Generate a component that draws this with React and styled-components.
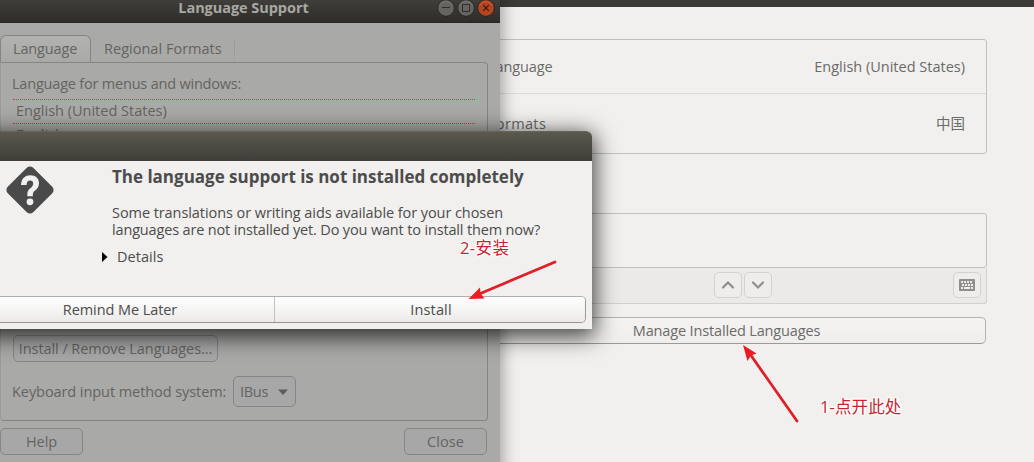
import React from "react";
import styled, { createGlobalStyle, css } from "styled-components";

const GlobalStyle = createGlobalStyle`
  html, body { margin: 0; padding: 0; overflow: hidden; }
  *, *::before, *::after { box-sizing: border-box; }
`;

const uiFont = css`
  font-family: "Open Sans", "Noto Sans CJK SC", sans-serif;
  font-size: 14.5px;
  line-height: 18px;
`;

const Desktop = styled.main`
  ${uiFont}
  position: relative;
  width: 1034px;
  height: 462px;
  overflow: hidden;
  background: #f1f0ee;
`;

const Label = styled.span`
  white-space: nowrap;
  letter-spacing: ${(p) => p.$track || 0}px;
`;

/* Settings window */

const SettingsWindow = styled.section`
  position: absolute;
  left: 430px;
  top: 0;
  width: 604px;
  height: 462px;
  display: flex;
  flex-direction: column;
  background: #f1f0ee;
  color: #6b6b6a;
`;

const SettingsBar = styled.header`
  height: 7px;
  background: #3c3b37;
`;

const SettingsBody = styled.div`
  display: flex;
  flex-direction: column;
  padding: 32px 47px 0 37px;
`;

const List = styled.div`
  display: flex;
  flex-direction: column;
  border: 1px solid #c1c0be;
  border-radius: 3px;
`;

const ListRow = styled.div`
  display: flex;
  align-items: center;
  justify-content: space-between;
  height: ${(p) => p.$height}px;
  padding: 0 21px 0 20px;
  & + & { border-top: 1px solid #dbdad8; }
`;

const Sources = styled.div`
  display: flex;
  flex-direction: column;
  margin-top: 59px;
`;

const SourceList = styled(List)`
  height: 55px;
`;

const SourceToolbar = styled.div`
  display: flex;
  align-items: flex-start;
  height: 36px;
  padding: 4px 5px 0 246px;
  background: #ebeae8;
  border: 1px solid #d1d0ce;
  border-top: 0;
  border-radius: 0 0 3px 3px;
`;

const ToolButton = styled.button`
  display: flex;
  align-items: center;
  justify-content: center;
  width: 28px;
  height: 26px;
  margin-right: 2px;
  padding: 0;
  color: #8f8e8a;
  background: #eeedec;
  border: 1px solid #d3d2d0;
  border-radius: 5px;
`;

const KeyboardButton = styled(ToolButton)`
  margin: 0 0 0 auto;
`;

const ManageButton = styled.button`
  ${uiFont}
  display: flex;
  align-items: center;
  justify-content: center;
  height: 27px;
  margin: 13px 1px 0 0;
  padding: 0;
  color: #6b6b6a;
  background: linear-gradient(#f4f3f2, #efeeec);
  border: 1px solid #b3b2b0;
  border-bottom-color: #9b9a98;
  border-radius: 5px;
`;

/* Language Support window */

const LanguageWindow = styled.section`
  position: absolute;
  left: -13px;
  top: -8px;
  width: 513px;
  height: 500px;
  display: flex;
  flex-direction: column;
  color: #65645f;
  background: #a9a9a7;
  box-shadow: 0 3px 16px 1px rgba(0, 0, 0, 0.4);
`;

const LanguageBar = styled.header`
  position: relative;
  display: flex;
  align-items: center;
  justify-content: center;
  height: 31px;
  flex: none;
  padding-top: 2px;
  background: linear-gradient(#454440, #2e2d29);
  border-bottom: 1px solid #282824;
  color: #a9a7a1;
  font-weight: 700;
`;

const WindowControls = styled.div`
  position: absolute;
  right: 5px;
  top: 7px;
  display: flex;
  gap: 2px;
`;

const LanguageBody = styled.div`
  display: flex;
  flex-direction: column;
  padding: 12px 12px 0 13px;
`;

const Tabs = styled.div`
  display: flex;
  align-items: flex-end;
  height: 27px;
`;

const Tab = styled.div`
  display: flex;
  align-items: center;
  height: 27px;
  padding: 0 13px;
  ${(p) =>
    p.$active
      ? css`
          width: 91px;
          border: 1px solid #858583;
          border-bottom: 0;
          border-radius: 6px 6px 0 0;
          background: linear-gradient(#b2b2b0, #a9a9a7);
          padding-left: 12px;
        `
      : css`
          width: 144px;
          border-right: 1px solid #9c9c9a;
          border-image: linear-gradient(#a9a9a7, #969694, #a9a9a7) 1;
        `}
`;

const Page = styled.div`
  display: flex;
  flex-direction: column;
  height: 359px;
  padding: 12px 12px 0 11px;
  border: 1px solid #858583;
  border-left-color: #9a9a98;
  border-radius: 0 4px 4px 4px;
`;

const Languages = styled.div`
  display: flex;
  flex-direction: column;
  height: 236px;
  margin: 6px 0 0 1px;
  overflow: hidden;
`;

const LanguageItem = styled.div`
  display: flex;
  flex-direction: column;
  flex: none;
  height: 24px;
  padding: 2px 0 0 3px;
  border-top: 1px dotted #b8452f;
`;

const Button = styled.button`
  ${uiFont}
  display: flex;
  align-items: center;
  justify-content: ${(p) => (p.$spread ? "space-between" : "center")};
  flex: none;
  width: ${(p) => p.$width}px;
  height: ${(p) => p.$height || 27}px;
  padding: ${(p) => (p.$spread ? "0 7px 0 6px" : 0)};
  color: #65645f;
  background: #a7a7a8;
  border: 1px solid #868684;
  border-radius: 5px;
`;

const InstallRemoveButton = styled(Button)`
  margin-left: 1px;
`;

const InputMethod = styled.div`
  display: flex;
  align-items: center;
  justify-content: space-between;
  width: 284px;
  margin-top: 14px;
`;

const Actions = styled.div`
  display: flex;
  justify-content: space-between;
  margin: 7px 1px 0 0;
`;

/* Question dialog */

const Dialog = styled.section`
  position: absolute;
  left: -41px;
  top: 131px;
  width: 633px;
  height: 198px;
  display: flex;
  flex-direction: column;
  color: #4c4c4c;
  background: #f1f0ee;
  border-radius: 6px 6px 0 0;
  box-shadow: 0 5px 22px 3px rgba(0, 0, 0, 0.72);
`;

const DialogBar = styled.header`
  flex: none;
  height: 30px;
  background: linear-gradient(#5b594f, #3e3d38);
  border-top: 1px solid #66645b;
  border-radius: 6px 6px 0 0;
`;

const DialogBody = styled.div`
  display: flex;
  gap: 58px;
  height: 135px;
  flex: none;
  padding: 5px 0 0 47px;
`;

const DialogText = styled.div`
  display: flex;
  flex-direction: column;
`;

const DialogTitle = styled.h1`
  margin: 0;
  font-size: 17px;
  line-height: 22px;
  font-weight: 700;
  letter-spacing: -0.01px;
  white-space: nowrap;
`;

const Message = styled.p`
  display: flex;
  flex-direction: column;
  margin: 16px 0 0;
  line-height: 17px;
`;

const Details = styled.div`
  display: flex;
  align-items: center;
  gap: 9px;
  margin: 10px 0 0 -10px;
`;

const DialogActions = styled.div`
  display: flex;
  width: 622px;
  height: 27px;
  margin-left: 5px;
  border: 1px solid #b0afad;
  border-bottom-color: #979694;
  border-right-color: #979694;
  border-radius: 5px;
  overflow: hidden;
`;

const DialogButton = styled.button`
  ${uiFont}
  flex: 1;
  padding: 0 0 0 1px;
  color: #4c4c4c;
  background: linear-gradient(#ffffff, #ebeae8);
  border: 0;
  & + & {
    padding-left: 2px;
    border-left: 1px solid #c4c3c1;
  }
`;

/* Annotations */

const ArrowLayer = styled.svg`
  position: absolute;
  inset: 0;
  pointer-events: none;
`;

const Note = styled.div`
  position: absolute;
  left: ${(p) => p.$x}px;
  top: ${(p) => p.$y}px;
  font: 16.5px/24px "Open Sans", "Noto Sans CJK SC", sans-serif;
  letter-spacing: ${(p) => p.$track}px;
  color: #c6252d;
  white-space: nowrap;
  text-shadow: 0 0 2px #fff, 1px 1px 1px #fff, -1px -1px 1px #fff,
    1px -1px 1px #fff, -1px 1px 1px #fff, 2px 0 1px #fff;
`;

function ControlIcon({ kind }) {
  const close = kind === "close";
  return (
    <svg width="18" height="18" viewBox="0 0 18 18" fill="none">
      <circle cx="9" cy="9" r="8.3" fill={close ? "#b5451f" : "#65645f"} stroke="#22211e" strokeWidth="0.8" />
      <path d="M2.5 7a7 7 0 0 1 13 0" stroke={close ? "#c96743" : "#7b7a74"} strokeWidth="0.8" />
      {kind === "minimize" && <path d="M5 8.5h8" stroke="#302f2b" />}
      {kind === "maximize" && <rect x="5.5" y="5.5" width="7" height="7" stroke="#302f2b" />}
      {close && <path d="M6.2 6.2l5.6 5.6M11.8 6.2l-5.6 5.6" stroke="#3a1a0e" strokeWidth="1.2" />}
    </svg>
  );
}

function Chevron({ up }) {
  return (
    <svg width="14" height="10" viewBox="0 0 14 10" fill="none">
      <path
        d={up ? "M2 7.5L7 2.5L12 7.5" : "M2 2.5L7 7.5L12 2.5"}
        stroke="currentColor"
        strokeWidth="2.2"
        strokeLinecap="round"
      />
    </svg>
  );
}

function KeyboardIcon() {
  return (
    <svg width="16" height="12" viewBox="0 0 16 12">
      <rect width="16" height="12" rx="0.7" fill="currentColor" />
      <path
        d="M2 2h2v2h-2zM5 2h2v2h-2zM8 2h2v2h-2zM11 2h2v2h-2zM3 5h2v2h-2zM6 5h2v2h-2zM9 5h2v2h-2zM12 5h2v2h-2zM2 8h2v2h-2zM5 8h6v2h-6zM12 8h2v2h-2z"
        fill="#eeedec"
      />
    </svg>
  );
}

function QuestionIcon() {
  return (
    <svg width="48" height="48" viewBox="0 0 48 48" fill="none">
      <rect x="6" y="6" width="36" height="36" rx="4.5" fill="#4a4a4a" transform="rotate(45 24 24)" />
      <path
        d="M15 19C15.200 12.500 19 9.200 24.300 9.200C29.800 9.200 33 12.500 33 17.200C33 21 31 23 28.800 24.700C27 26.100 26.800 27.300 26.800 30.300H21.300C21.300 26 21.800 24.300 24.300 22.300C26.300 20.700 27.200 19.500 27.200 17.500C27.200 15.500 26 14.400 24 14.400C21.800 14.400 20.600 16 20.600 19Z"
        fill="#f1f0ee"
      />
      <circle cx="24" cy="35.800" r="3.400" fill="#f1f0ee" />
    </svg>
  );
}

const notes = [
  { x: 460, y: 236, track: 0.4, text: "2-安装" },
  { x: 820, y: 395, track: 0.1, text: "1-点开此处" },
];

export default function App() {
  return (
    <Desktop>
      <GlobalStyle />
      <SettingsWindow>
        <SettingsBar />
        <SettingsBody>
          <List>
            <ListRow $height={53}>
              <Label $track={-0.1}>Language</Label>
              <Label>English (United States)</Label>
            </ListRow>
            <ListRow $height={60}>
              <Label $track={0.35}>Formats</Label>
              <Label>中国</Label>
            </ListRow>
          </List>
          <Sources>
            <SourceList />
            <SourceToolbar>
              <ToolButton><Chevron up /></ToolButton>
              <ToolButton><Chevron /></ToolButton>
              <KeyboardButton><KeyboardIcon /></KeyboardButton>
            </SourceToolbar>
          </Sources>
          <ManageButton><Label $track={-0.15}>Manage Installed Languages</Label></ManageButton>
        </SettingsBody>
      </SettingsWindow>

      <LanguageWindow>
        <LanguageBar>
          <Label $track={-0.05}>Language Support</Label>
          <WindowControls>
            <ControlIcon kind="minimize" />
            <ControlIcon kind="maximize" />
            <ControlIcon kind="close" />
          </WindowControls>
        </LanguageBar>
        <LanguageBody>
          <Tabs>
            <Tab $active><Label $track={-0.15}>Language</Label></Tab>
            <Tab><Label $track={0.02}>Regional Formats</Label></Tab>
          </Tabs>
          <Page>
            <Label $track={-0.2}>Language for menus and windows:</Label>
            <Languages>
              <LanguageItem><Label>English (United States)</Label></LanguageItem>
              <LanguageItem><Label>English</Label></LanguageItem>
            </Languages>
            <InstallRemoveButton $width={205}>
              <Label $track={-0.06}>Install / Remove Languages...</Label>
            </InstallRemoveButton>
            <InputMethod>
              <Label $track={-0.07}>Keyboard input method system:</Label>
              <Button $width={63} $height={31} $spread>
                <Label $track={-0.3}>IBus</Label>
                <svg width="10" height="6" viewBox="0 0 10 6"><path d="M0 0.500h10L5 6z" fill="#5d5c58" /></svg>
              </Button>
            </InputMethod>
          </Page>
          <Actions>
            <Button $width={83}><Label $track={-0.1}>Help</Label></Button>
            <Button $width={83}><Label $track={0.1}>Close</Label></Button>
          </Actions>
        </LanguageBody>
      </LanguageWindow>

      <Dialog>
        <DialogBar />
        <DialogBody>
          <QuestionIcon />
          <DialogText>
            <DialogTitle>The language support is not installed completely</DialogTitle>
            <Message>
              <Label $track={-0.07}>Some translations or writing aids available for your chosen</Label>
              <Label $track={-0.157}>languages are not installed yet. Do you want to install them now?</Label>
            </Message>
            <Details>
              <svg width="6" height="10" viewBox="0 0 6 10"><path d="M0 0L5.500 5L0 10z" fill="#000" /></svg>
              <Label $track={0.05}>Details</Label>
            </Details>
          </DialogText>
        </DialogBody>
        <DialogActions>
          <DialogButton><Label $track={-0.08}>Remind Me Later</Label></DialogButton>
          <DialogButton><Label $track={0.15}>Install</Label></DialogButton>
        </DialogActions>
      </Dialog>

      <ArrowLayer width="1034" height="462" viewBox="0 0 1034 462" fill="#ec1c24" stroke="#de2028">
        <path d="M555 262L478 294.500M797 421L750 354" strokeWidth="2.800" strokeLinecap="round" />
        <path d="M468.500 299L480 287.500L480.500 293.500L484.500 298.500z" stroke="none" />
        <path d="M743 345L756.500 353.500L751 355.500L747.500 361z" stroke="none" />
      </ArrowLayer>
      {notes.map((note) => (
        <Note key={note.text} $x={note.x} $y={note.y} $track={note.track}>{note.text}</Note>
      ))}
    </Desktop>
  );
}
